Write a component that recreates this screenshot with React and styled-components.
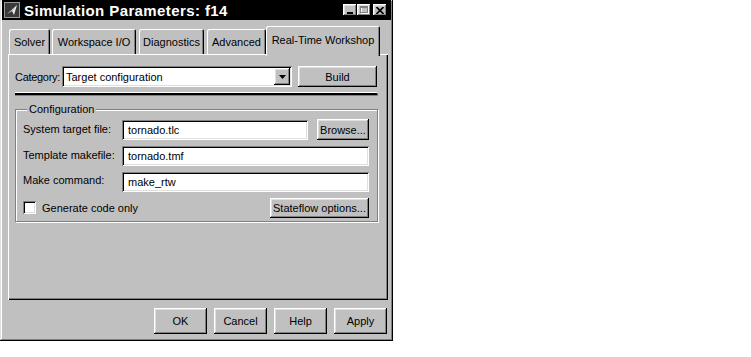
import React from "react";
import styled, { createGlobalStyle } from "styled-components";

const Global = createGlobalStyle`
  html, body { margin: 0; padding: 0; background: #ffffff; }
  body { font-family: "Liberation Sans", Arial, sans-serif; font-size: 11px; color: #000; }
  * { box-sizing: border-box; }
`;

const raised = `
  box-shadow: inset -1px -1px #000, inset 1px 1px #fff, inset -2px -2px #808080, inset 2px 2px #dfdfdf;
`;
const sunken = `
  box-shadow: inset 1px 1px #808080, inset -1px -1px #fff, inset 2px 2px #000, inset -2px -2px #dfdfdf;
`;

const Window = styled.div`
  width: 393px;
  height: 341px;
  background: #c0c0c0;
  display: flex;
  flex-direction: column;
  padding: 0 2px 2px 2px;
  box-shadow: inset -1px -1px #000, inset 1px 1px #dfdfdf, inset -2px -2px #808080, inset 2px 2px #fff;
`;

const TitleBar = styled.div`
  height: 20px;
  background: #000;
  display: flex;
  align-items: center;
  padding: 0 4px 0 2px;
  flex: none;
`;

const TitleText = styled.div`
  color: #fff;
  font-weight: bold;
  font-size: 15px;
  letter-spacing: 0.4px;
  margin-left: 4px;
  flex: 1;
  white-space: nowrap;
`;

const CapButton = styled.div`
  width: 14px;
  height: 12px;
  background: #c0c0c0;
  ${raised}
  display: flex;
  align-items: center;
  justify-content: center;
  margin-left: ${(p) => p.$gap || 0}px;
`;

const Body = styled.div`
  flex: 1;
  display: flex;
  flex-direction: column;
  padding: 6px 3px 0 6px;
`;

const TabStrip = styled.div`
  display: flex;
  align-items: flex-end;
  height: 28px;
  padding-left: 1px;
  position: relative;
  z-index: 1;
`;

const Tab = styled.div`
  width: ${(p) => p.$w}px;
  margin-right: ${(p) => p.$mr || 0}px;
  height: ${(p) => (p.$active ? 30 : 25)}px;
  margin-bottom: ${(p) => (p.$active ? -2 : 0)}px;
  background: #c0c0c0;
  border-radius: 2px 2px 0 0;
  box-shadow: inset 1px 1px #fff, inset -1px 0 #000, inset -2px 0 #808080;
  display: flex;
  justify-content: center;
  padding-top: ${(p) => (p.$active ? 8 : 7)}px;
  white-space: nowrap;
`;

const Panel = styled.div`
  height: 246px;
  background: #c0c0c0;
  box-shadow: inset 1px 1px #fff, inset -1px -1px #000, inset -2px -2px #808080;
  padding: 12px 11px 0 7px;
  display: flex;
  flex-direction: column;
`;

const CategoryRow = styled.div`
  display: flex;
  align-items: center;
  height: 21px;
`;

const Label = styled.div`
  width: ${(p) => p.$w}px;
  flex: none;
  white-space: nowrap;
  letter-spacing: ${(p) => p.$ls || 0}px;
  padding-bottom: ${(p) => p.$lift || 0}px;
`;

const Combo = styled.div`
  flex: 1;
  height: 21px;
  background: #fff;
  ${sunken}
  display: flex;
  align-items: center;
  padding: 2px 2px 2px 4px;
`;

const ComboText = styled.div`
  flex: 1;
`;

const ComboArrow = styled.div`
  width: 16px;
  height: 17px;
  background: #c0c0c0;
  ${raised}
  display: flex;
  align-items: center;
  justify-content: center;
`;

const Button = styled.div`
  width: ${(p) => p.$w}px;
  height: ${(p) => p.$h || 21}px;
  margin-left: ${(p) => p.$ml || 0}px;
  flex: none;
  background: #c0c0c0;
  ${raised}
  display: flex;
  align-items: center;
  justify-content: center;
  white-space: nowrap;
`;

const Separator = styled.div`
  height: 4px;
  margin-top: 5px;
  margin-right: -1px;
  border-top: 1px solid #fff;
  background: #000;
  border-bottom: 1px solid #808080;
  border-radius: 0 2px 2px 0;
`;

const Group = styled.fieldset`
  margin: 7px -1px 0 0;
  padding: 3px 8px 3px 7px;
  border: 1px solid #808080;
  box-shadow: inset 1px 1px #fff, 1px 1px #fff;
  display: flex;
  flex-direction: column;
  gap: 5px;
`;

const Legend = styled.legend`
  padding: 0 2px;
  margin-left: 4px;
  background: #c0c0c0;
  line-height: 13px;
`;

const Row = styled.div`
  display: flex;
  align-items: center;
  height: 21px;
`;

const Input = styled.div`
  flex: 1;
  height: ${(p) => p.$h || 20}px;
  background: #fff;
  ${sunken}
  display: flex;
  align-items: center;
  padding: 0 4px 0 6px;
  white-space: nowrap;
`;

const CheckBox = styled.div`
  width: 13px;
  height: 13px;
  background: #fff;
  ${sunken}
  flex: none;
`;

const CheckLabel = styled.div`
  margin-left: 6px;
  flex: 1;
  white-space: nowrap;
`;

const ButtonRow = styled.div`
  display: flex;
  justify-content: flex-end;
  gap: 7px;
  margin-top: 8px;
  padding-right: 1px;
`;

const AppIcon = () => (
  <svg width="16" height="16" viewBox="0 0 16 16">
    <rect x="0.5" y="0.5" width="15" height="15" fill="#3a3a3a" stroke="#9a9a9a" />
    <polygon points="3,12 13,3 10,13 8,9" fill="#e8e8e8" />
    <polygon points="8,9 13,3 6,10" fill="#9a9a9a" />
  </svg>
);

export default function App() {
  return (
    <>
      <Global />
      <Window>
        <TitleBar>
          <AppIcon />
          <TitleText>Simulation Parameters: f14</TitleText>
          <CapButton>
            <svg width="8" height="8" viewBox="0 0 8 8">
              <rect x="1" y="6" width="6" height="2" fill="#000" />
            </svg>
          </CapButton>
          <CapButton>
            <svg width="9" height="8" viewBox="0 0 9 8">
              <rect x="1.5" y="0.5" width="7" height="7" fill="none" stroke="#fff" />
              <rect x="0.5" y="0.5" width="7" height="6" fill="none" stroke="#808080" />
              <line x1="0.5" y1="1.5" x2="7.5" y2="1.5" stroke="#808080" />
            </svg>
          </CapButton>
          <CapButton $gap={2}>
            <svg width="8" height="7" viewBox="0 0 8 7">
              <path d="M0.5 0 L7.5 7 M7.5 0 L0.5 7" stroke="#000" strokeWidth="1.6" />
            </svg>
          </CapButton>
        </TitleBar>
        <Body>
          <TabStrip>
            <Tab $w={41} $mr={2}>Solver</Tab>
            <Tab $w={84} $mr={3}>Workspace I/O</Tab>
            <Tab $w={65} $mr={3}>Diagnostics</Tab>
            <Tab $w={59} $mr={0}>Advanced</Tab>
            <Tab $w={114} $active>Real-Time Workshop</Tab>
          </TabStrip>
          <Panel>
            <CategoryRow>
              <Label $w={47} $ls={-0.3}>Category:</Label>
              <Combo>
                <ComboText>Target configuration</ComboText>
                <ComboArrow>
                  <svg width="7" height="4" viewBox="0 0 7 4">
                    <polygon points="0,0 7,0 3.5,4" fill="#000" />
                  </svg>
                </ComboArrow>
              </Combo>
              <Button $w={79} $ml={6}>Build</Button>
            </CategoryRow>
            <Separator />
            <Group>
              <Legend>Configuration</Legend>
              <Row>
                <Label $w={99} $lift={2}>System target file:</Label>
                <Input>tornado.tlc</Input>
                <Button $w={52} $ml={9}>Browse...</Button>
              </Row>
              <Row>
                <Label $w={99} $lift={2}>Template makefile:</Label>
                <Input>tornado.tmf</Input>
              </Row>
              <Row>
                <Label $w={99} $lift={4}>Make command:</Label>
                <Input>make_rtw</Input>
              </Row>
              <Row>
                <CheckBox />
                <CheckLabel>Generate code only</CheckLabel>
                <Button $w={99} $h={20}>Stateflow options...</Button>
              </Row>
            </Group>
          </Panel>
          <ButtonRow>
            <Button $w={53} $h={26}>OK</Button>
            <Button $w={53} $h={26}>Cancel</Button>
            <Button $w={53} $h={26}>Help</Button>
            <Button $w={53} $h={26}>Apply</Button>
          </ButtonRow>
        </Body>
      </Window>
    </>
  );
}
